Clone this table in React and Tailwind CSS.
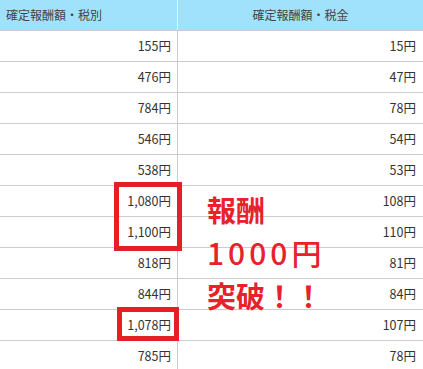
const rows = [
  ['155円', '15円'],
  ['476円', '47円'],
  ['784円', '78円'],
  ['546円', '54円'],
  ['538円', '53円'],
  ['1,080円', '108円'],
  ['1,100円', '110円'],
  ['818円', '81円'],
  ['844円', '84円'],
  ['1,078円', '107円'],
  ['785円', '78円'],
]

export default function App() {
  return (
    <div
      className="relative w-[423px] h-[369px] overflow-hidden bg-white text-[#333] text-[12px]"
      style={{ fontFamily: '"Noto Sans CJK JP", "Noto Sans", sans-serif' }}
    >
      {/* header */}
      <div className="grid grid-cols-[178px_1fr] h-[30px] bg-[#a0e1fb]">
        <div className="flex items-center pl-[6px] border-r border-[#e6f6fd] text-[#444]">確定報酬額・税別</div>
        <div className="flex items-center justify-center text-[#444]">確定報酬額・税金</div>
      </div>

      {/* body */}
      {rows.map(([a, b], i) => (
        <div key={i} className="grid grid-cols-[178px_1fr] h-[31px] border-t border-[#cccccc]">
          <div className="flex items-center justify-end pr-[6px] border-r border-[#cccccc] text-[12.5px]">{a}</div>
          <div className="flex items-center justify-end pr-[7px] text-[12.5px]">{b}</div>
        </div>
      ))}

      {/* highlight boxes */}
      <div className="absolute left-[114px] top-[182px] w-[68px] h-[69px] border-[5px] border-[#e61e25]"></div>
      <div className="absolute left-[117px] top-[307px] w-[62px] h-[34px] border-[5px] border-[#e61e25]"></div>

      {/* callout */}
      <div className="absolute left-[207px] top-[188px] text-[#e8212a] text-[29px] leading-[43px] font-bold">
        <div>報酬</div>
        <div className="font-medium text-[30px] tracking-[4px]">1000円</div>
        <div>突破！！</div>
      </div>
    </div>
  )
}
